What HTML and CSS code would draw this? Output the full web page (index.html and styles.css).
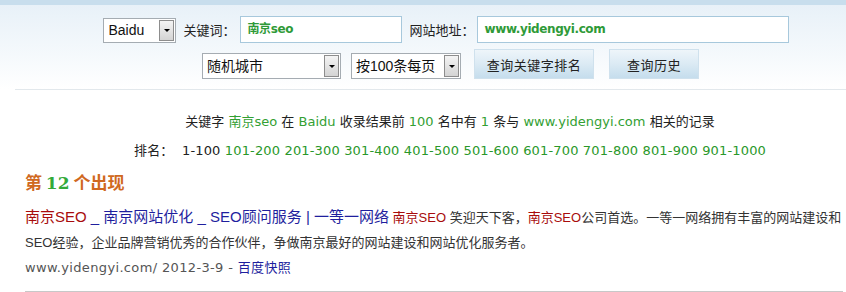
FILE: index.html
```html
<!DOCTYPE html>
<html lang="zh-CN">
<head>
<meta charset="utf-8">
<title>关键字排名查询</title>
<link rel="stylesheet" href="styles.css">
</head>
<body>
<div class="topbar"></div>
<div class="panel">
  <div class="wrap">
    <div class="row row1">
      <div class="sel sel-engine"><span class="sel-text">Baidu</span><span class="sel-btn"><i></i></span></div>
      <span class="lbl lbl-kw">关键词：</span>
      <div class="inp inp-kw">南京seo</div>
      <span class="lbl lbl-url">网站地址：</span>
      <div class="inp inp-url">www.yidengyi.com</div>
    </div>
    <div class="row row2">
      <div class="sel sel-city"><span class="sel-text">随机城市</span><span class="sel-btn"><i></i></span></div>
      <div class="sel sel-page"><span class="sel-text">按100条每页</span><span class="sel-btn"><i></i></span></div>
      <button class="btn btn-rank">查询关键字排名</button>
      <button class="btn btn-hist">查询历史</button>
    </div>
  </div>
</div>
<div class="sep"></div>
<div class="wrap info">
  <p class="summary">关键字 <span class="g">南京seo</span> 在 <span class="g">Baidu</span> 收录结果前 <span class="g">100</span> 名中有 <span class="g">1</span> 条与 <span class="g">www.yidengyi.com</span> 相关的记录</p>
  <p class="pages">排名：&nbsp; <span class="cur">1-100</span> <a>101-200</a> <a>201-300</a> <a>301-400</a> <a>401-500</a> <a>501-600</a> <a>601-700</a> <a>701-800</a> <a>801-900</a> <a>901-1000</a></p>
</div>
<div class="results">
  <h3 class="hit">第 <span class="num">12</span> 个出现</h3>
  <p class="res"><a class="title"><span class="red">南京SEO</span> _ 南京网站优化 _ SEO顾问服务 | 一等一网络</a> <span class="snip"><span class="red">南京SEO</span> 笑迎天下客，<span class="red">南京SEO</span>公司首选。一等一网络拥有丰富的网站建设和SEO经验，企业品牌营销优秀的合作伙伴，争做南京最好的网站建设和网站优化服务者。</span></p>
  <p class="meta">www.yidengyi.com/ 2012-3-9 - <a>百度快照</a></p>
</div>
</body>
</html>
```

FILE: styles.css
```css
html, body {
  margin: 0;
  padding: 0;
  overflow: hidden;
  background: #fff;
}
body {
  font-family: "DejaVu Sans", "Noto Sans CJK SC", sans-serif;
  font-size: 12px;
  color: #222;
}
.topbar {
  height: 5px;
  background: #c8deed;
}
.panel {
  background: linear-gradient(to bottom, #e8f1f8 0%, #f5f9fc 60%, #ffffff 100%);
  padding: 11px 0 10px;
}
.wrap {
  width: 850px;
  margin-left: 25px;
}
.row {
  display: flex;
  justify-content: center;
  align-items: flex-start;
}
.row1 {
  height: 27px;
  margin-bottom: 6px;
  padding-right: 8px;
}
.row2 {
  height: 30px;
  padding-left: 1px;
}
.sel {
  box-sizing: border-box;
  display: flex;
  align-items: stretch;
  background: #fff;
  border: 1px solid #a5acb2;
  font-family: "Liberation Sans", "Noto Sans CJK SC", sans-serif;
  font-size: 14px;
  color: #111;
}
.sel-text {
  flex: 1;
  padding-left: 4px;
  line-height: 23px;
  white-space: nowrap;
}
.sel-btn {
  width: 15px;
  margin: 1px;
  box-sizing: border-box;
  border: 1px solid #8d8d8d;
  background: linear-gradient(to bottom, #f4f4f4, #d4d4d4);
  display: flex;
  align-items: center;
  justify-content: center;
}
.sel-btn i {
  width: 0;
  height: 0;
  border-left: 3px solid transparent;
  border-right: 3px solid transparent;
  border-top: 3px solid #000;
}
.sel-engine {
  width: 73px;
  height: 25px;
  margin-top: 2px;
}
.sel-city {
  width: 139px;
  height: 26px;
  margin-top: 4px;
  margin-right: 10px;
}
.sel-page {
  width: 110px;
  height: 26px;
  margin-top: 4px;
  margin-right: 13px;
}
.sel-city .sel-text, .sel-page .sel-text {
  line-height: 24px;
}
.lbl {
  font-family: "Noto Sans CJK SC", sans-serif;
  font-size: 13px;
  line-height: 27px;
  color: #222;
  white-space: nowrap;
}
.lbl-kw { margin: 0 4px 0 7px; }
.lbl-url { margin: 0 2px 0 8px; }
.inp {
  box-sizing: border-box;
  height: 27px;
  border: 1px solid #a7c8dc;
  background: #fff;
  padding-left: 7px;
  font-family: "DejaVu Sans", "Noto Sans CJK SC", sans-serif;
  font-weight: bold;
  font-size: 12px;
  letter-spacing: -0.4px;
  line-height: 25px;
  color: #2f9a38;
}
.inp-kw { width: 162px; }
.inp-url { width: 312px; }
.btn {
  box-sizing: border-box;
  height: 30px;
  border: 1px solid #cfe1ed;
  background: linear-gradient(to bottom, #eef5fa 0%, #dbeaf4 50%, #c5dded 100%);
  font-family: "Noto Sans CJK SC", sans-serif;
  font-size: 13px;
  color: #222;
  padding: 0;
  letter-spacing: 0.5px;
}
.btn-rank { width: 120px; margin-right: 15px; }
.btn-hist { width: 90px; }
.sep {
  height: 1px;
  margin-left: 15px;
  background: #e2e8ec;
}
.info {
  text-align: center;
  padding-top: 17px;
  font-size: 13px;
}
.info p {
  margin: 0;
  line-height: 29px;
  white-space: nowrap;
}
.pages { letter-spacing: 0.15px; }
.g { color: #33a033; }
.pages a { color: #2a982a; }
.pages .cur { color: #222; }
.results {
  margin-left: 25px;
  width: 818px;
  padding-top: 5px;
}
.hit {
  margin: 0;
  font-family: "Noto Sans CJK SC", sans-serif;
  font-size: 17px;
  font-weight: bold;
  line-height: 24px;
  color: #d0691f;
}
.hit .num {
  font-family: "DejaVu Serif", serif;
  color: #33aa3a;
}
.res {
  margin: 10px 0 0;
  line-height: 25px;
  font-size: 13px;
  font-family: "Liberation Sans", "Noto Sans CJK SC", sans-serif;
}
.title {
  font-size: 15px;
  line-height: 1;
  color: #1f1f9e;
}
.red { color: #a80c0c; }
.snip {
  font-size: 13px;
  line-height: 1;
  color: #333;
}
.meta {
  margin: 0;
  line-height: 25px;
  font-size: 13px;
  letter-spacing: 0.35px;
  color: #555;
  padding-bottom: 11px;
  border-bottom: 1px solid #c8c8c8;
}
.meta a { color: #1f1f9e; font-family: "Noto Sans CJK SC", sans-serif; line-height: 1; }
```
